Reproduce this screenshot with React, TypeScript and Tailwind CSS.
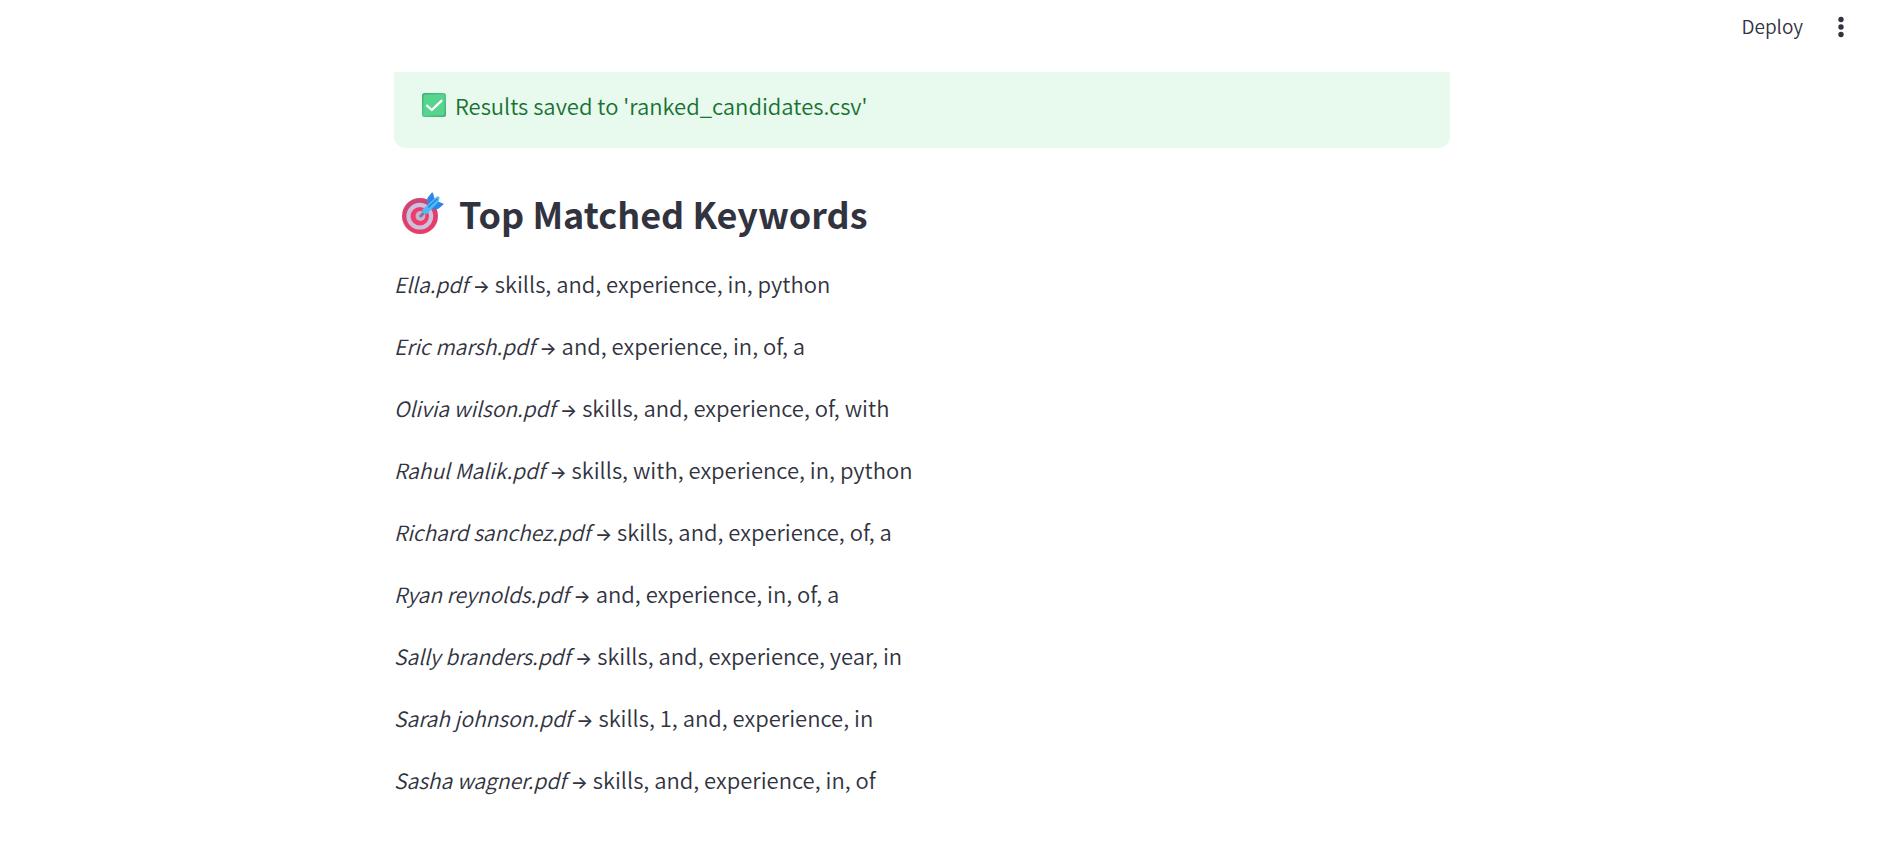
const matches = [
  { file: "Ella.pdf", keywords: "skills, and, experience, in, python" },
  { file: "Eric marsh.pdf", keywords: "and, experience, in, of, a" },
  { file: "Olivia wilson.pdf", keywords: "skills, and, experience, of, with" },
  { file: "Rahul Malik.pdf", keywords: "skills, with, experience, in, python" },
  { file: "Richard sanchez.pdf", keywords: "skills, and, experience, of, a" },
  { file: "Ryan reynolds.pdf", keywords: "and, experience, in, of, a" },
  { file: "Sally branders.pdf", keywords: "skills, and, experience, year, in" },
  { file: "Sarah johnson.pdf", keywords: "skills, 1, and, experience, in" },
  { file: "Sasha wagner.pdf", keywords: "skills, and, experience, in, of" },
];

function CheckIcon() {
  return (
    <svg viewBox="0 0 24 24" className="size-6 shrink-0" aria-hidden="true">
      <defs>
        <linearGradient id="check-edge" x1="0" y1="0" x2="1" y2="1">
          <stop offset="0" stopColor="#3fa873" />
          <stop offset="0.5" stopColor="#4fc98a" />
          <stop offset="1" stopColor="#4aa876" />
        </linearGradient>
      </defs>
      <rect width="24" height="24" rx="2.5" fill="url(#check-edge)" />
      <rect x="1.4" y="1.4" width="21" height="21" rx="1.5" fill="#57d48d" />
      <path d="M5 12.6 L9.8 17 L19.4 7.8" fill="none" stroke="#fff" strokeWidth="2.3" strokeLinecap="round" strokeLinejoin="round" />
    </svg>
  );
}

function TargetIcon() {
  return (
    <svg viewBox="0 0 42 42" className="size-[42px] shrink-0" aria-hidden="true">
      <defs>
        <linearGradient id="target-rim" x1="0.2" y1="0" x2="0.6" y2="1">
          <stop offset="0" stopColor="#cc4674" />
          <stop offset="1" stopColor="#ea3c66" />
        </linearGradient>
        <linearGradient id="dart-wing" x1="0" y1="0" x2="1" y2="1">
          <stop offset="0" stopColor="#2f95ea" />
          <stop offset="1" stopColor="#2679ec" />
        </linearGradient>
      </defs>
      <circle cx="18" cy="24" r="18" fill="url(#target-rim)" />
      <circle cx="17.8" cy="24.2" r="13.4" fill="#cdc0de" />
      <circle cx="17.8" cy="24.2" r="9.2" fill="#f03c6c" />
      <circle cx="18.4" cy="24" r="4.9" fill="#c3b4cf" />
      <path d="M18.8 24 L24 18.8" stroke="#87738f" strokeWidth="3" strokeLinecap="round" />
      <path d="M25.5 12.5 L25.3 6.8 Q25.4 6 26 5.2 L29.8 0.6 Q30.6 0 31 1 L33 8.5 Z" fill="url(#dart-wing)" />
      <path d="M29.5 17.2 L35.4 17 Q36.3 16.9 37 16.2 L41.4 12.6 Q42.1 11.8 41 11.4 L33.5 8.5 Z" fill="url(#dart-wing)" />
      <path d="M20.8 17.2 L32.2 6.4 L35.4 4.4 Q37 4 37.6 6 L36.4 9.8 L25.4 21.6 Q23 23 21 20.9 Q19.4 19 20.8 17.2 Z" fill="#50b9f6" />
      <path d="M26.6 15 L34.8 7.2" stroke="#2282d4" strokeWidth="1.3" strokeLinecap="round" />
    </svg>
  );
}

export default function App() {
  return (
    <div className="min-h-screen bg-white font-['Noto_Sans_CJK_SC','Noto_Sans',sans-serif] text-[22px] leading-[38px] text-[#31333f]">
      <header className="relative z-10 flex h-[72px] items-start justify-end gap-[18px] bg-white pr-9 pt-2">
        <button type="button" className="px-2 text-[19px] leading-9 font-[350]">
          Deploy
        </button>
        <button type="button" aria-label="Main menu" className="flex h-[38px] w-6 items-center justify-center">
          <svg viewBox="0 0 24 24" className="size-6" fill="#31333f" aria-hidden="true">
            <circle cx="12" cy="4.5" r="2.7" />
            <circle cx="12" cy="12" r="2.7" />
            <circle cx="12" cy="19.5" r="2.7" />
          </svg>
        </button>
      </header>

      <main className="-mt-[10px] pr-[45px]">
        <div className="mx-auto max-w-[1056px]">
          <div role="status" className="flex items-center gap-[9px] rounded-xl bg-[#e8f9ee] px-7 py-6 font-[350] text-[#177233]">
            <CheckIcon />
            <p>Results saved to 'ranked_candidates.csv'</p>
          </div>

          <h2 className="mt-10 flex items-center gap-[15px] pl-2 text-[36px] leading-[50px] font-bold">
            <TargetIcon />
            Top Matched Keywords
          </h2>

          <div className="mt-[26px] flex flex-col gap-6 pb-10 font-[350]">
            {matches.map(({ file, keywords }) => (
              <p key={file}>
                <em className="text-[21px] leading-none">{file}</em>{" "}
                <span className="font-[Inter] text-[18px] leading-none font-medium">→</span> {keywords}
              </p>
            ))}
          </div>
        </div>
      </main>
    </div>
  );
}
